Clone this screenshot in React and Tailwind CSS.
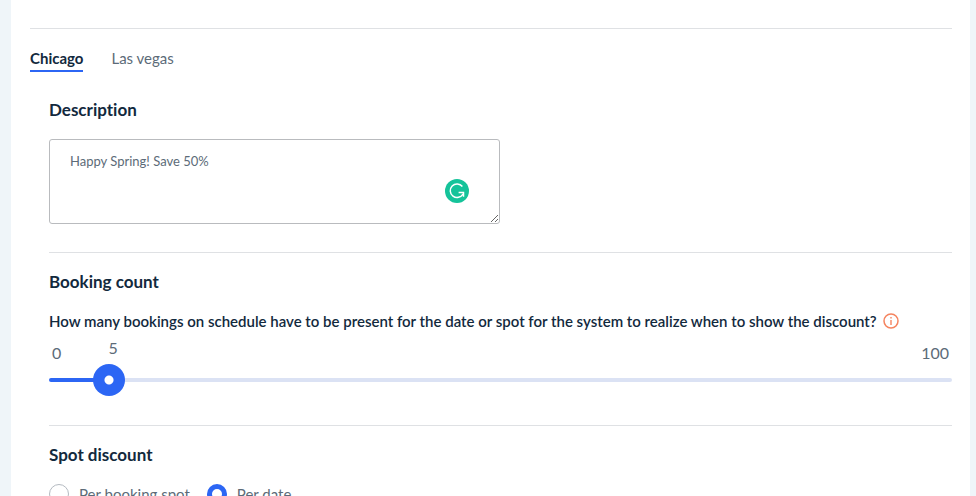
import React, { useState } from 'react';

const CITIES = ['Chicago', 'Las vegas'];
const THUMB_SIZE = 32;

function Section({ title, children }) {
  return (
    <section className="mt-7 border-t border-[#dfe1e4] pt-[17px]">
      <h2 className="text-[17px] leading-6 font-bold text-[#12293d]">{title}</h2>
      {children}
    </section>
  );
}

function InfoIcon() {
  return (
    <svg width="16" height="16" viewBox="0 0 16 16" fill="none" stroke="#f5845f">
      <circle cx="8" cy="8" r="7" strokeWidth="1.5" />
      <path d="M8 7v5M8 4v1.5" strokeWidth="1.4" />
    </svg>
  );
}

function GrammarBadge() {
  return (
    <svg
      className="absolute top-10 right-[31px]"
      width="24"
      height="24"
      viewBox="0 0 24 24"
      fill="none"
      aria-hidden="true"
    >
      <circle cx="12" cy="12" r="12" fill="#15c39a" />
      <path
        d="M17.4 7.5A6.8 6.8 0 1 0 18 15M13.6 13.6h4.9v4.2"
        stroke="#fff"
        strokeWidth="1.5"
      />
    </svg>
  );
}

function CountSlider({ value, onChange }) {
  // centre of the thumb, measured from the left end of the track
  const thumbX = `calc(${THUMB_SIZE / 2}px + (100% - ${THUMB_SIZE}px) * ${value / 100})`;

  return (
    <div className="relative mt-2.5 pb-px text-base leading-5 text-[#5c6b78]">
      <div className="flex justify-between px-[3px]">
        <span>0</span>
        <span>100</span>
      </div>
      <output className="absolute -top-[5px]" htmlFor="booking-count" style={{ left: thumbX }}>
        {value}
      </output>
      <input
        id="booking-count"
        type="range"
        min="0"
        max="100"
        value={value}
        onChange={(e) => onChange(Number(e.target.value))}
        aria-labelledby="booking-count-label"
        className="mt-px block h-8 w-full cursor-pointer appearance-none bg-transparent [&::-webkit-slider-runnable-track]:h-1 [&::-webkit-slider-runnable-track]:rounded-full [&::-webkit-slider-runnable-track]:bg-[linear-gradient(to_right,#2c66f4_var(--fill),#dbe2f4_var(--fill))] [&::-webkit-slider-thumb]:-mt-3.5 [&::-webkit-slider-thumb]:size-8 [&::-webkit-slider-thumb]:appearance-none [&::-webkit-slider-thumb]:rounded-full [&::-webkit-slider-thumb]:bg-[radial-gradient(circle,#fff_0_4px,#2c66f4_5px)]"
        style={{ '--fill': thumbX }}
      />
    </div>
  );
}

function RadioOption({ label, value, selected, onSelect }) {
  return (
    <label className="flex cursor-pointer items-center gap-2.5">
      <input
        type="radio"
        name="spot-discount"
        value={value}
        checked={selected === value}
        onChange={() => onSelect(value)}
        className="size-5 appearance-none rounded-full border border-[#b4bac1] bg-white checked:border-[5px] checked:border-[#2c66f4]"
      />
      {label}
    </label>
  );
}

export default function App() {
  const [city, setCity] = useState('Chicago');
  const [description, setDescription] = useState('Happy Spring! Save 50%');
  const [count, setCount] = useState(5);
  const [discount, setDiscount] = useState('date');

  return (
    <div className="h-screen overflow-hidden bg-[#eff5f9] pr-1.5 pl-[11px] font-['Lato',sans-serif] [font-variant-ligatures:none]">
      <main className="min-h-full bg-white pt-7 pr-[18px] pb-7 pl-[19px]">
        <nav className="flex gap-7 border-t border-[#dfe1e4] pt-[19px] text-[15px] leading-5">
          {CITIES.map((name) => (
            <button
              key={name}
              type="button"
              onClick={() => setCity(name)}
              className={
                name === city
                  ? 'border-b-2 border-[#2c66f4] pb-0.5 font-bold text-[#12293d]'
                  : 'border-b-2 border-transparent pb-0.5 text-[#5c6b78]'
              }
            >
              {name}
            </button>
          ))}
        </nav>

        <div className="mt-[26px] pl-[19px]">
          <label
            htmlFor="description"
            className="block text-[17px] leading-6 font-bold text-[#12293d]"
          >
            Description
          </label>
          <div className="relative mt-[17px] w-full max-w-[451px]">
            <textarea
              id="description"
              value={description}
              onChange={(e) => setDescription(e.target.value)}
              className="block h-[85px] w-full rounded-[3px] border border-[#b9bbbe] bg-white px-5 py-[11px] text-[13px] leading-5 text-[#5c6b78] outline-none"
            />
            <GrammarBadge />
          </div>

          <Section title="Booking count">
            <div className="mt-[15px] flex items-center gap-1.5">
              <p
                id="booking-count-label"
                className="text-[15px] leading-6 font-semibold text-[#12293d]"
              >
                How many bookings on schedule have to be present for the date or spot for the system
                to realize when to show the discount?
              </p>
              <button type="button" aria-label="More information">
                <InfoIcon />
              </button>
            </div>
            <CountSlider value={count} onChange={setCount} />
          </Section>

          <Section title="Spot discount">
            <div className="mt-[17px] flex gap-[17px] text-[15px] leading-5 text-[#5c6b78]">
              <RadioOption
                label="Per booking spot"
                value="spot"
                selected={discount}
                onSelect={setDiscount}
              />
              <RadioOption
                label="Per date"
                value="date"
                selected={discount}
                onSelect={setDiscount}
              />
            </div>
          </Section>
        </div>
      </main>
    </div>
  );
}
